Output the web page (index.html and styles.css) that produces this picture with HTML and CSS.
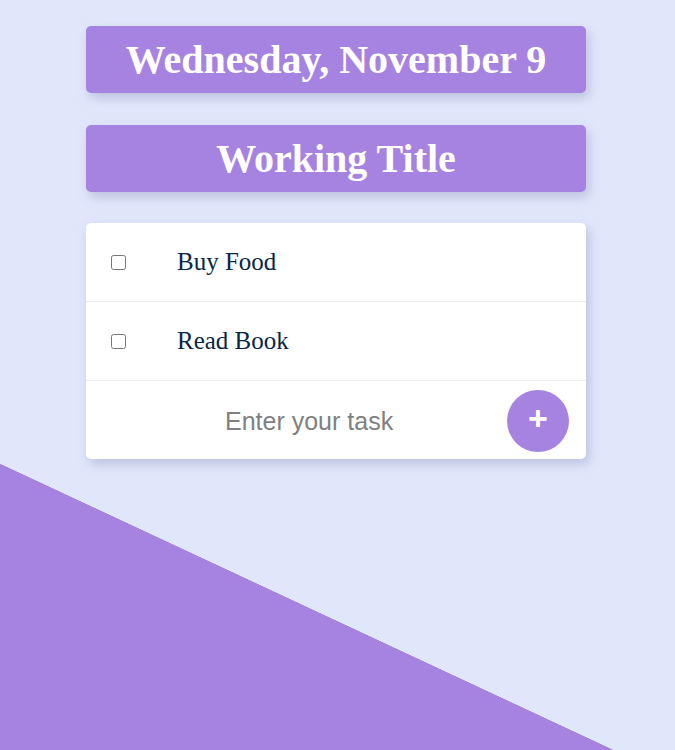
FILE: index.html
```html
<!DOCTYPE html>
<html>
<head>
<meta charset="utf-8">
<link rel="stylesheet" href="styles.css">
</head>
<body>
<main class="app">
  <div class="banner"><h1>Wednesday, November 9</h1></div>
  <div class="banner"><h1>Working Title</h1></div>
  <div class="card">
    <div class="item"><input type="checkbox" class="check"><p>Buy Food</p></div>
    <div class="item"><input type="checkbox" class="check"><p>Read Book</p></div>
    <form class="add">
      <input type="text" class="task" placeholder="Enter your task">
      <button type="button" class="plus">+</button>
    </form>
  </div>
</main>
</body>
</html>
```

FILE: styles.css
```css
html, body {
  margin: 0;
  padding: 0;
  height: 100%;
}
body {
  background: #e1e7fb linear-gradient(to top right, #a683e1 50%, transparent 50.1%) no-repeat left bottom / 613px 286px;
  font-family: "Liberation Serif", "Times New Roman", serif;
}
.app {
  width: 500px;
  margin-left: 86px;
  padding-top: 26px;
  display: flex;
  flex-direction: column;
}
.banner {
  background: #a683e1;
  border-radius: 5px;
  height: 67px;
  display: flex;
  align-items: center;
  justify-content: center;
  box-shadow: 3px 5px 12px rgba(120, 120, 170, 0.35);
  margin-bottom: 32px;
}
.banner h1 {
  margin: 0;
  color: #fff;
  font-size: 40px;
  font-weight: bold;
}
.card {
  margin-top: -1px;
  background: #fff;
  border-radius: 5px;
  box-shadow: 3px 5px 12px rgba(120, 120, 170, 0.35);
}
.item {
  height: 78px;
  display: flex;
  align-items: center;
  border-bottom: 1px solid #eeeeee;
}
.check {
  width: 15px;
  height: 15px;
  margin: 0 0 0 25px;
  flex-shrink: 0;
}
.item p {
  margin: 0 0 0 51px;
  font-size: 25px;
  color: #0a2647;
}
.add {
  height: 78px;
  display: flex;
  align-items: center;
  margin: 0;
}
.task {
  flex: 1;
  width: 0;
  min-width: 0;
  border: none;
  outline: none;
  background: transparent;
  font-family: "Liberation Sans", Arial, sans-serif;
  font-size: 25px;
  padding: 2px 0 0 139px;
  height: 40px;
  color: #333;
}
.task::placeholder {
  color: #808080;
}
.plus {
  flex-shrink: 0;
  width: 62px;
  height: 62px;
  border-radius: 50%;
  border: none;
  background: #a683e1;
  color: #fff;
  font-family: "Liberation Sans", Arial, sans-serif;
  font-size: 34px;
  font-weight: bold;
  line-height: 1;
  padding: 0 0 6px 0;
  margin: 1px 17px 0 0;
}
```
